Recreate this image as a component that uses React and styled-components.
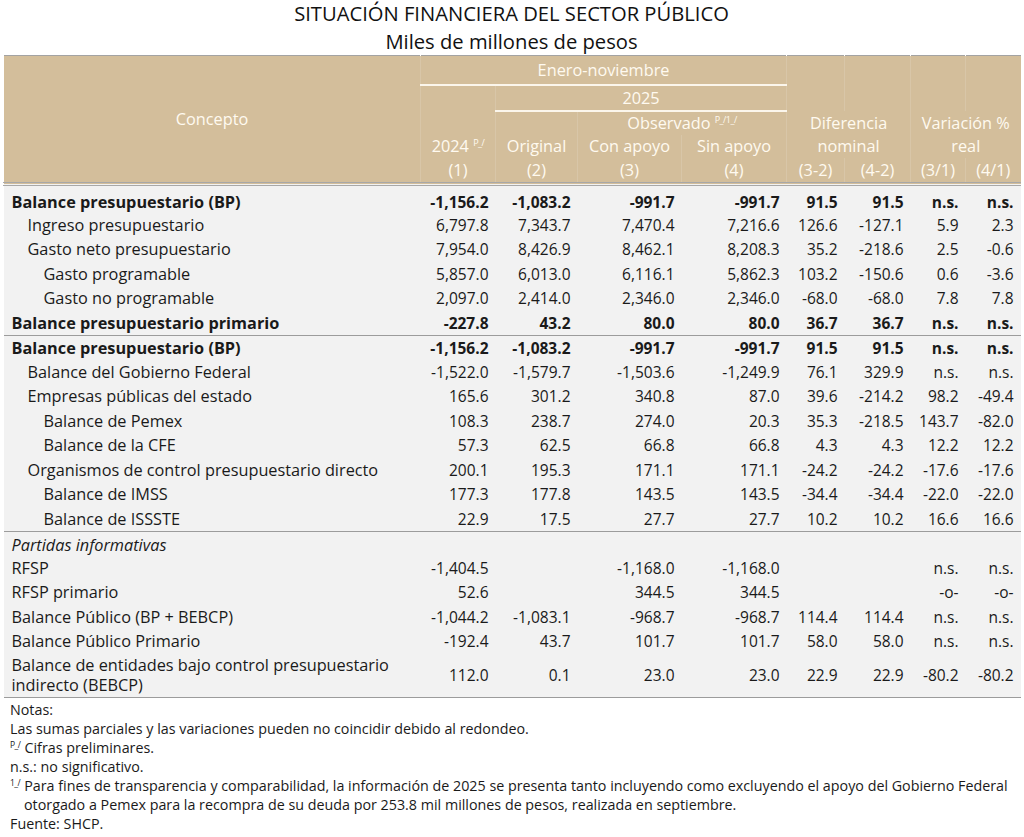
import React from "react";
import styled, { createGlobalStyle } from "styled-components";

const GlobalStyle = createGlobalStyle`
    body {
        margin: 0;
        background: #ffffff;
        font-family: "Open Sans", "Noto Sans", sans-serif;
        color: #1a1a1a;
    }
`;

const Page = styled.div`
    width: 1024px;
    padding: 0 4px 0 3px;
    box-sizing: border-box;
`;

const Title = styled.h1`
    margin: 0;
    font-size: 20.2px;
    font-weight: 400;
    line-height: 27.5px;
    text-align: center;
    color: #111;
`;

const Table = styled.table`
    width: 1017px;
    border-collapse: collapse;
    table-layout: fixed;
    font-size: 16.3px;
    border-top: 1px solid #a3a3a3;
`;

const Head = styled.thead`
    border-bottom: 4px double #a8a8a8;
`;

const HeadRow = styled.tr`
    height: ${(p) => p.$h}px;
`;

const HeadCell = styled.th`
    background: #d3be9b;
    color: #fffaf0;
    font-weight: 400;
    padding: 0;
    text-align: center;
    white-space: nowrap;
    border-left: 1px solid rgba(255, 255, 255, 0.13);
    border-bottom: ${(p) => (p.$rule ? "2px solid #fbf6ec" : "none")};
`;

const Section = styled.tbody`
    border-bottom: 1.5px solid #9c9c9c;

    tr:first-child td {
        padding-top: ${(p) => p.$gap}px;
    }
`;

const Row = styled.tr`
    height: 24.5px;
    font-weight: ${(p) => (p.$bold ? 700 : 400)};
    font-style: ${(p) => (p.$italic ? "italic" : "normal")};
`;

const Label = styled.td`
    background: #f2f2f2;
    padding: ${(p) => (p.$wrap ? "1px 4px 2px" : "0 4px")};
    padding-left: ${(p) => 8 + p.$level * 16}px;
    text-align: left;
    white-space: nowrap;
    line-height: 20px;
`;

const Num = styled.td`
    background: #f2f2f2;
    padding: 0 7px 0 0;
    font-size: 15.5px;
    text-align: right;
    white-space: nowrap;
`;

const Sup = styled.span`
    font-size: 9px;
    position: relative;
    top: -6px;
    line-height: 0;
    letter-spacing: -0.5px;
`;

const Notes = styled.div`
    padding: 2px 0 0 7px;
    font-size: 14.3px;
    line-height: 19px;
    color: #1a1a1a;
`;

const Note = styled.div`
    padding-left: ${(p) => (p.$hang ? 14 : 0)}px;
    text-indent: ${(p) => (p.$hang ? -14 : 0)}px;
`;

const NoteMark = styled.span`
    font-size: 8.5px;
    position: relative;
    top: -5px;
    line-height: 0;
    margin-right: 4px;
    letter-spacing: -0.5px;
`;

const widths = [417, 75, 82, 104, 105, 58, 66, 55, 55];

const sections = [
    [
        { label: "Balance presupuestario (BP)", level: 0, bold: true, v: ["-1,156.2", "-1,083.2", "-991.7", "-991.7", "91.5", "91.5", "n.s.", "n.s."] },
        { label: "Ingreso presupuestario", level: 1, v: ["6,797.8", "7,343.7", "7,470.4", "7,216.6", "126.6", "-127.1", "5.9", "2.3"] },
        { label: "Gasto neto presupuestario", level: 1, v: ["7,954.0", "8,426.9", "8,462.1", "8,208.3", "35.2", "-218.6", "2.5", "-0.6"] },
        { label: "Gasto programable", level: 2, v: ["5,857.0", "6,013.0", "6,116.1", "5,862.3", "103.2", "-150.6", "0.6", "-3.6"] },
        { label: "Gasto no programable", level: 2, v: ["2,097.0", "2,414.0", "2,346.0", "2,346.0", "-68.0", "-68.0", "7.8", "7.8"] },
        { label: "Balance presupuestario primario", level: 0, bold: true, v: ["-227.8", "43.2", "80.0", "80.0", "36.7", "36.7", "n.s.", "n.s."] },
    ],
    [
        { label: "Balance presupuestario (BP)", level: 0, bold: true, v: ["-1,156.2", "-1,083.2", "-991.7", "-991.7", "91.5", "91.5", "n.s.", "n.s."] },
        { label: "Balance del Gobierno Federal", level: 1, v: ["-1,522.0", "-1,579.7", "-1,503.6", "-1,249.9", "76.1", "329.9", "n.s.", "n.s."] },
        { label: "Empresas públicas del estado", level: 1, v: ["165.6", "301.2", "340.8", "87.0", "39.6", "-214.2", "98.2", "-49.4"] },
        { label: "Balance de Pemex", level: 2, v: ["108.3", "238.7", "274.0", "20.3", "35.3", "-218.5", "143.7", "-82.0"] },
        { label: "Balance de la CFE", level: 2, v: ["57.3", "62.5", "66.8", "66.8", "4.3", "4.3", "12.2", "12.2"] },
        { label: "Organismos de control presupuestario directo", level: 1, v: ["200.1", "195.3", "171.1", "171.1", "-24.2", "-24.2", "-17.6", "-17.6"] },
        { label: "Balance de IMSS", level: 2, v: ["177.3", "177.8", "143.5", "143.5", "-34.4", "-34.4", "-22.0", "-22.0"] },
        { label: "Balance de ISSSTE", level: 2, v: ["22.9", "17.5", "27.7", "27.7", "10.2", "10.2", "16.6", "16.6"] },
    ],
    [
        { label: "Partidas informativas", level: 0, italic: true, v: ["", "", "", "", "", "", "", ""] },
        { label: "RFSP", level: 0, v: ["-1,404.5", "", "-1,168.0", "-1,168.0", "", "", "n.s.", "n.s."] },
        { label: "RFSP primario", level: 0, v: ["52.6", "", "344.5", "344.5", "", "", "-o-", "-o-"] },
        { label: "Balance Público (BP + BEBCP)", level: 0, v: ["-1,044.2", "-1,083.1", "-968.7", "-968.7", "114.4", "114.4", "n.s.", "n.s."] },
        { label: "Balance Público Primario", level: 0, v: ["-192.4", "43.7", "101.7", "101.7", "58.0", "58.0", "n.s.", "n.s."] },
        { label: ["Balance de entidades bajo control presupuestario", "indirecto (BEBCP)"], level: 0, v: ["112.0", "0.1", "23.0", "23.0", "22.9", "22.9", "-80.2", "-80.2"] },
    ],
];

const gaps = [5, 1, 2];

const App = () => {
    return (
        <Page>
            <GlobalStyle />
            <Title>SITUACIÓN FINANCIERA DEL SECTOR PÚBLICO</Title>
            <Title>Miles de millones de pesos</Title>
            <Table>
                <colgroup>
                    {widths.map((w, i) => (
                        <col key={i} style={{ width: w }} />
                    ))}
                </colgroup>
                <Head>
                    <HeadRow $h={29}>
                        <HeadCell rowSpan={5}>Concepto</HeadCell>
                        <HeadCell colSpan={4} $rule>Enero-noviembre</HeadCell>
                        <HeadCell />
                        <HeadCell />
                        <HeadCell />
                        <HeadCell />
                    </HeadRow>
                    <HeadRow $h={26}>
                        <HeadCell />
                        <HeadCell colSpan={3} $rule>2025</HeadCell>
                        <HeadCell />
                        <HeadCell />
                        <HeadCell />
                        <HeadCell />
                    </HeadRow>
                    <HeadRow $h={24}>
                        <HeadCell />
                        <HeadCell />
                        <HeadCell colSpan={2}>
                            Observado <Sup>P_/1_/</Sup>
                        </HeadCell>
                        <HeadCell colSpan={2}>Diferencia</HeadCell>
                        <HeadCell colSpan={2}>Variación %</HeadCell>
                    </HeadRow>
                    <HeadRow $h={23}>
                        <HeadCell>
                            2024 <Sup>P_/</Sup>
                        </HeadCell>
                        <HeadCell>Original</HeadCell>
                        <HeadCell>Con apoyo</HeadCell>
                        <HeadCell>Sin apoyo</HeadCell>
                        <HeadCell colSpan={2}>nominal</HeadCell>
                        <HeadCell colSpan={2}>real</HeadCell>
                    </HeadRow>
                    <HeadRow $h={26}>
                        <HeadCell>(1)</HeadCell>
                        <HeadCell>(2)</HeadCell>
                        <HeadCell>(3)</HeadCell>
                        <HeadCell>(4)</HeadCell>
                        <HeadCell>(3-2)</HeadCell>
                        <HeadCell>(4-2)</HeadCell>
                        <HeadCell>(3/1)</HeadCell>
                        <HeadCell>(4/1)</HeadCell>
                    </HeadRow>
                </Head>
                {sections.map((rows, s) => (
                    <Section key={s} $gap={gaps[s]}>
                        {rows.map((r, i) => {
                            const wrap = Array.isArray(r.label);
                            return (
                                <Row key={i} $bold={r.bold} $italic={r.italic}>
                                    <Label $level={r.level} $wrap={wrap}>
                                        {wrap ? (
                                            <>
                                                {r.label[0]}
                                                <br />
                                                {r.label[1]}
                                            </>
                                        ) : (
                                            r.label
                                        )}
                                    </Label>
                                    {r.v.map((x, j) => (
                                        <Num key={j}>{x}</Num>
                                    ))}
                                </Row>
                            );
                        })}
                    </Section>
                ))}
            </Table>
            <Notes>
                <Note>Notas:</Note>
                <Note>Las sumas parciales y las variaciones pueden no coincidir debido al redondeo.</Note>
                <Note>
                    <NoteMark>P_/</NoteMark>Cifras preliminares.
                </Note>
                <Note>n.s.: no significativo.</Note>
                <Note $hang>
                    <NoteMark>1_/</NoteMark>Para fines de transparencia y comparabilidad, la información de 2025 se presenta tanto
                    incluyendo como excluyendo el apoyo del Gobierno Federal
                    <br />
                    otorgado a Pemex para la recompra de su deuda por 253.8 mil millones de pesos, realizada en septiembre.
                </Note>
                <Note>Fuente: SHCP.</Note>
            </Notes>
        </Page>
    );
};

export default App;
